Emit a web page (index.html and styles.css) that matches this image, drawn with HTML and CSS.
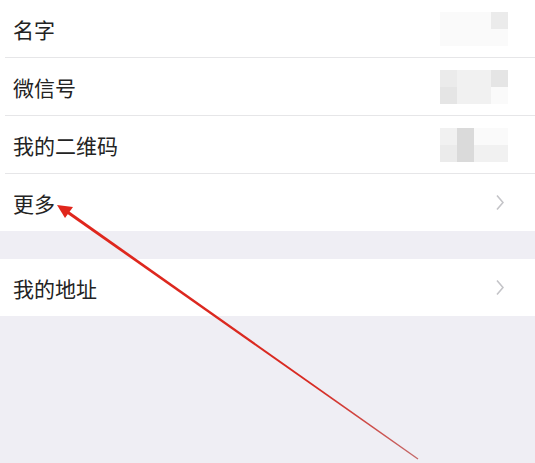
FILE: index.html
```html
<!DOCTYPE html>
<html lang="zh-CN">
<head>
    <meta charset="UTF-8">
    <title>个人信息</title>
    <link rel="stylesheet" href="styles.css">
</head>
<body>

<div class="group">
    <div class="row">
        <span class="label">名字</span>
        <div class="blur">
            <i class="s0"></i><i class="s0"></i><i class="s0"></i><i class="s2"></i>
            <i class="s0"></i><i class="s0"></i><i class="s0"></i><i class="s0"></i>
        </div>
    </div>
    <div class="row">
        <span class="label">微信号</span>
        <div class="blur">
            <i class="s2"></i><i class="s1"></i><i class="s1"></i><i class="s3"></i>
            <i class="s3"></i><i class="s1"></i><i class="s1"></i><i class="s0"></i>
        </div>
    </div>
    <div class="row">
        <span class="label">我的二维码</span>
        <div class="blur">
            <i class="s1"></i><i class="s4"></i><i class="s0"></i><i class="s0"></i>
            <i class="s2"></i><i class="s4"></i><i class="s1"></i><i class="s1"></i>
        </div>
    </div>
    <div class="row">
        <span class="label">更多</span>
        <svg class="chevron" viewBox="0 0 8 16"><polyline points="1,1 7,8 1,15"/></svg>
    </div>
</div>

<div class="group second">
    <div class="row">
        <span class="label">我的地址</span>
        <svg class="chevron" viewBox="0 0 8 16"><polyline points="1,1 7,8 1,15"/></svg>
    </div>
</div>

<!-- red annotation arrow drawn on top -->
<svg class="arrow" viewBox="0 0 535 463">
    <defs>
        <linearGradient id="fade" gradientUnits="userSpaceOnUse" x1="66" y1="211" x2="418" y2="459">
            <stop offset="0" stop-color="#e0261c"/>
            <stop offset="0.7" stop-color="#d82a22"/>
            <stop offset="1" stop-color="#c46a6a"/>
        </linearGradient>
    </defs>
    <polygon points="65.1,212.2 66.9,209.8 418.4,458.4 417.6,459.6" fill="url(#fade)"/>
    <polygon points="57,205 73,207 65,218" fill="#e0261c"/>
</svg>

</body>
</html>
```

FILE: styles.css
```css
html, body {
    margin: 0;
    background-color: #efeef4;
    font-family: "Noto Sans CJK SC", "Noto Sans", sans-serif;
}
body {
    position: relative;
    width: 535px;
    height: 463px;
    overflow: hidden;
}
.group {
    background-color: white;
    padding-left: 5px;
}
.second {
    margin-top: 28px;
}
.row {
    height: 57px;
    display: flex;
    align-items: center;
    justify-content: space-between;
    padding: 0 31px 0 8px;
    border-bottom: 1px solid #e6e6e8;
}
.group .row:last-child {
    border-bottom: none;
}
.label {
    font-size: 21px;
    color: #232323;
}
.chevron {
    width: 8px;
    height: 17px;
    fill: none;
    stroke: #c4c4c8;
    stroke-width: 1.6;
}
.blur {
    display: grid;
    grid-template-columns: repeat(4, 17px);
    grid-template-rows: repeat(2, 17px);
    margin-right: -4px;
}
.blur i {
    display: block;
}
.s0 { background-color: #fafafa; }
.s1 { background-color: #f1f1f1; }
.s2 { background-color: #ebebeb; }
.s3 { background-color: #e5e5e5; }
.s4 { background-color: #dadada; }
.arrow {
    position: absolute;
    left: 0;
    top: 0;
    width: 535px;
    height: 463px;
}
```
